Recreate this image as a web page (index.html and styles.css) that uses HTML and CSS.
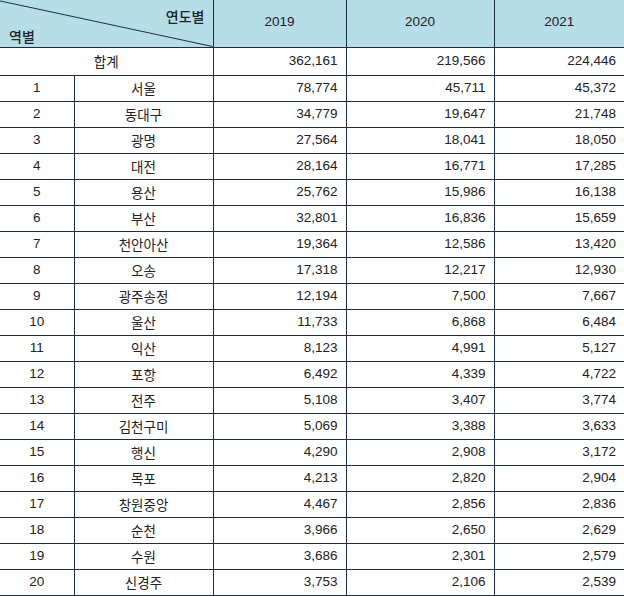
FILE: index.html
```html
<!DOCTYPE html>
<html lang="ko">
<head>
<meta charset="utf-8">
<link rel="stylesheet" href="styles.css">
</head>
<body>
<table class="stats">
  <colgroup>
    <col class="c-no"><col class="c-name"><col class="c-y1"><col class="c-y2"><col class="c-y3">
  </colgroup>
  <thead>
    <tr class="head">
      <th colspan="2" class="corner">
        <svg class="diag" viewBox="0 0 100 100" preserveAspectRatio="none"><line x1="0" y1="2" x2="100" y2="100" stroke="#1c2f45" stroke-width="1" vector-effect="non-scaling-stroke"/></svg>
        <span class="col-label">연도별</span>
        <span class="row-label">역별</span>
      </th>
      <th>2019</th>
      <th>2020</th>
      <th>2021</th>
    </tr>
  </thead>
  <tbody>
    <tr class="total"><td colspan="2" class="name">합계</td><td>362,161</td><td>219,566</td><td>224,446</td></tr>
    <tr><td class="no">1</td><td class="name">서울</td><td>78,774</td><td>45,711</td><td>45,372</td></tr>
    <tr><td class="no">2</td><td class="name">동대구</td><td>34,779</td><td>19,647</td><td>21,748</td></tr>
    <tr><td class="no">3</td><td class="name">광명</td><td>27,564</td><td>18,041</td><td>18,050</td></tr>
    <tr><td class="no">4</td><td class="name">대전</td><td>28,164</td><td>16,771</td><td>17,285</td></tr>
    <tr><td class="no">5</td><td class="name">용산</td><td>25,762</td><td>15,986</td><td>16,138</td></tr>
    <tr><td class="no">6</td><td class="name">부산</td><td>32,801</td><td>16,836</td><td>15,659</td></tr>
    <tr><td class="no">7</td><td class="name">천안아산</td><td>19,364</td><td>12,586</td><td>13,420</td></tr>
    <tr><td class="no">8</td><td class="name">오송</td><td>17,318</td><td>12,217</td><td>12,930</td></tr>
    <tr><td class="no">9</td><td class="name">광주송정</td><td>12,194</td><td>7,500</td><td>7,667</td></tr>
    <tr><td class="no">10</td><td class="name">울산</td><td>11,733</td><td>6,868</td><td>6,484</td></tr>
    <tr><td class="no">11</td><td class="name">익산</td><td>8,123</td><td>4,991</td><td>5,127</td></tr>
    <tr><td class="no">12</td><td class="name">포항</td><td>6,492</td><td>4,339</td><td>4,722</td></tr>
    <tr><td class="no">13</td><td class="name">전주</td><td>5,108</td><td>3,407</td><td>3,774</td></tr>
    <tr><td class="no">14</td><td class="name">김천구미</td><td>5,069</td><td>3,388</td><td>3,633</td></tr>
    <tr><td class="no">15</td><td class="name">행신</td><td>4,290</td><td>2,908</td><td>3,172</td></tr>
    <tr><td class="no">16</td><td class="name">목포</td><td>4,213</td><td>2,820</td><td>2,904</td></tr>
    <tr><td class="no">17</td><td class="name">창원중앙</td><td>4,467</td><td>2,856</td><td>2,836</td></tr>
    <tr><td class="no">18</td><td class="name">순천</td><td>3,966</td><td>2,650</td><td>2,629</td></tr>
    <tr><td class="no">19</td><td class="name">수원</td><td>3,686</td><td>2,301</td><td>2,579</td></tr>
    <tr><td class="no">20</td><td class="name">신경주</td><td>3,753</td><td>2,106</td><td>2,539</td></tr>
  </tbody>
</table>
</body>
</html>
```
FILE: styles.css
```css
html, body {
  margin: 0;
  padding: 0;
  background: #ffffff;
}

.stats {
  border-collapse: collapse;
  table-layout: fixed;
  width: 624px;
  font-family: "Liberation Sans", "Noto Sans CJK KR", sans-serif;
  font-size: 13.5px;
  color: #222222;
}

.c-no { width: 74px; }
.c-name { width: 139px; }
.c-y1 { width: 133px; }
.c-y2 { width: 148px; }
.c-y3 { width: 130px; }

.stats th,
.stats td {
  border: 1px solid #1a2d42;
  padding: 0 8px;
  line-height: 16px;
}

.stats tr > :first-child { border-left: none; }
.stats tr > :last-child { border-right: none; }
.stats thead th { border-top: none; }

.head { height: 47px; }
.head th {
  background: #b7dde8;
  font-weight: normal;
  text-align: center;
  padding-bottom: 3px;
}

.corner {
  position: relative;
  padding: 0;
}

.diag {
  position: absolute;
  left: 0;
  top: 0;
  width: 100%;
  height: 100%;
}

.col-label,
.row-label {
  position: absolute;
  font-family: "Noto Sans CJK KR", sans-serif;
  font-size: 14px;
  line-height: 16px;
  font-weight: 500;
}

.col-label { right: 8px; top: 8px; }
.row-label { left: 9px; top: 28px; }

.stats tbody tr { height: 26px; }
.stats tbody tr.total { height: 28px; }

.stats td { text-align: right; }
.stats td.no { text-align: center; }
.stats td.name {
  text-align: center;
  font-family: "Noto Sans CJK KR", sans-serif;
  font-size: 13.5px;
}
```
